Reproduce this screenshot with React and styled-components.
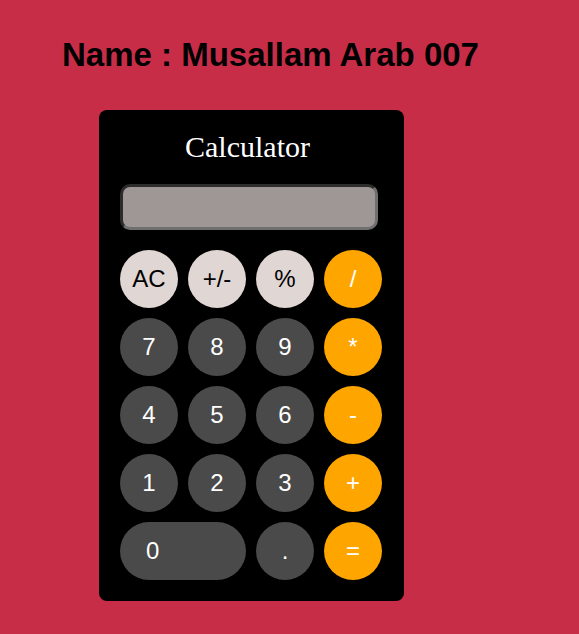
import React, { useState } from 'react';
import styled, { createGlobalStyle } from 'styled-components';

const GlobalStyle = createGlobalStyle`
  html, body {
    margin: 0;
    padding: 0;
    background: #c82d48;
  }
  body {
    font-family: "Liberation Sans", Arial, sans-serif;
  }
`

const Page = styled.div`
  min-height: 634px;
  padding-top: 36px;
  box-sizing: border-box;
`

const Heading = styled.h1`
  margin: 0 0 36px 62px;
  font-family: "Liberation Sans", Arial, sans-serif;
  font-size: 33px;
  font-weight: bold;
  color: #000;
  line-height: 38px;
`

const Panel = styled.div`
  width: 305px;
  margin-left: 99px;
  background: #000;
  border-radius: 8px;
  padding: 20px 0 21px 21px;
  box-sizing: border-box;
`

const Title = styled.div`
  font-family: "Liberation Serif", "Times New Roman", serif;
  font-size: 30px;
  color: #fff;
  text-align: center;
  padding-right: 29px;
  line-height: normal;
  margin-bottom: 20px;
`

const Display = styled.div`
  width: 258px;
  height: 46px;
  box-sizing: border-box;
  background: #9e9796;
  border: 3px solid;
  border-color: #2c2c2c #6f6f6f #6f6f6f #2c2c2c;
  border-radius: 10px;
  margin-bottom: 20px;
  color: #000;
  font-size: 24px;
  text-align: right;
  padding: 0 12px;
  line-height: 40px;
`

const Keys = styled.div`
  display: grid;
  grid-template-columns: repeat(4, 58px);
  grid-auto-rows: 58px;
  gap: 10px;
`

const tones = {
  light: { bg: '#e0d6d4', fg: '#000' },
  dark: { bg: '#4a4a4a', fg: '#fff' },
  orange: { bg: '#ffa500', fg: '#fff' },
}

const Key = styled.button`
  border: none;
  border-radius: 29px;
  background: ${p => tones[p.$tone].bg};
  color: ${p => tones[p.$tone].fg};
  font-family: "Liberation Sans", Arial, sans-serif;
  font-size: 24px;
  padding: 0;
  cursor: pointer;
  grid-column: ${p => (p.$wide ? 'span 2' : 'auto')};
  text-align: ${p => (p.$wide ? 'left' : 'center')};
  padding-left: ${p => (p.$wide ? '26px' : '0')};
`

const rows = [
  [['AC', 'light'], ['+/-', 'light'], ['%', 'light'], ['/', 'orange']],
  [['7', 'dark'], ['8', 'dark'], ['9', 'dark'], ['*', 'orange']],
  [['4', 'dark'], ['5', 'dark'], ['6', 'dark'], ['-', 'orange']],
  [['1', 'dark'], ['2', 'dark'], ['3', 'dark'], ['+', 'orange']],
  [['0', 'dark', true], ['.', 'dark'], ['=', 'orange']],
]

const App = () => {
  const [value] = useState('');

  return (
    <>
      <GlobalStyle />
      <Page>
        <Heading>Name : Musallam Arab 007</Heading>
        <Panel>
          <Title>Calculator</Title>
          <Display>{value}</Display>
          <Keys>
            {rows.flat().map(([label, tone, wide]) => (
              <Key key={label} $tone={tone} $wide={wide}>{label}</Key>
            ))}
          </Keys>
        </Panel>
      </Page>
    </>
  );
}

export default App;
